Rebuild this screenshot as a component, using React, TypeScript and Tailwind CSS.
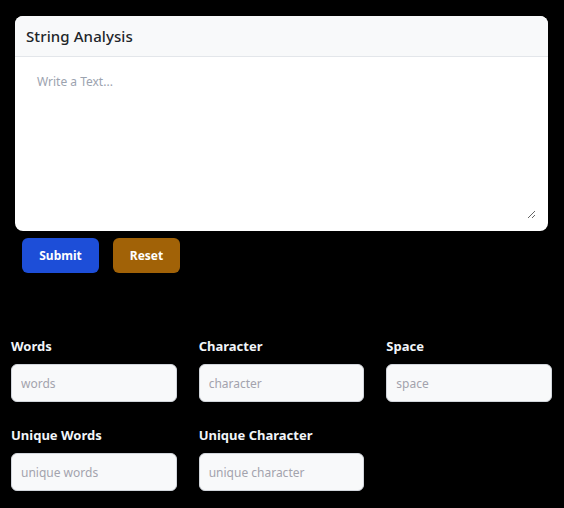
export default function App() {
  const fields = [
    { label: "Words", ph: "words" },
    { label: "Character", ph: "character" },
    { label: "Space", ph: "space" },
    { label: "Unique Words", ph: "unique words" },
    { label: "Unique Character", ph: "unique character" },
  ];
  return (
    <main className="min-h-[508px] bg-black pt-4 font-['Noto_Sans',sans-serif]">
      <section id="analysis" className="ml-[15px] mr-4 overflow-hidden rounded-lg bg-white">
        <div className="h-[41px] border-b border-[#e3e6ea] bg-[#f8f9fa] px-[11px] flex items-center">
          <h1 className="text-[15px] font-medium text-[#212529] tracking-[0.1px]">String Analysis</h1>
        </div>
        <div className="p-3">
          <textarea
            className="block h-[150px] w-full resize-y px-[10px] py-[4px] text-[12px] text-[#212529] outline-none placeholder:text-[#9ca3af]"
            placeholder="Write a Text..."
          />
        </div>
      </section>
      <div className="mt-[7px] ml-[22px] flex gap-[14px]">
        <button className="h-[35px] w-[77px] rounded-md bg-[#1d4ed8] pt-px text-[12px] font-bold text-white">Submit</button>
        <button className="h-[35px] w-[67px] rounded-md bg-[#a16207] pt-px text-[12px] font-bold text-white">Reset</button>
      </div>
      <div id="results" className="mt-[64px] grid grid-cols-3 gap-x-[22px] gap-y-[24px] pl-[11px] pr-3 pb-4">
        {fields.map((f) => (
          <div key={f.label}>
            <label className="block text-[13px] font-bold leading-[18px] text-[#f1f5f9]">{f.label}</label>
            <input
              className="mt-[9px] h-[38px] w-full rounded-md border border-[#d1d5db] bg-[#f8f9fa] px-[9px] text-[12px] outline-none placeholder:text-[#a3a3ad]"
              placeholder={f.ph}
            />
          </div>
        ))}
      </div>
    </main>
  );
}
